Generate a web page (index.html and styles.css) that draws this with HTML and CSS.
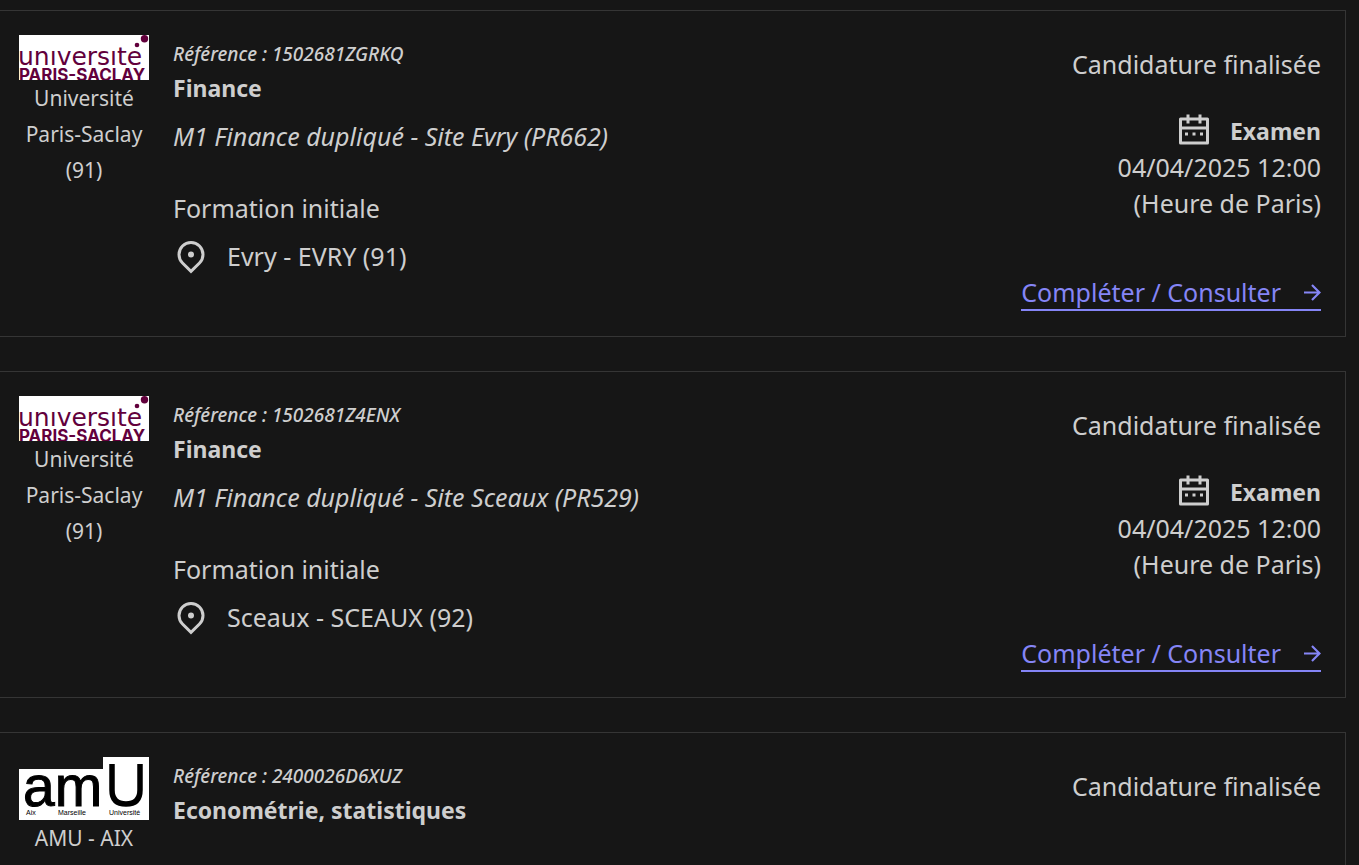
FILE: index.html
```html
<!DOCTYPE html>
<html lang="fr">
<head>
  <meta charset="utf-8">
  <title>Mes candidatures</title>
  <link rel="stylesheet" href="styles.css">
</head>
<body>
  <!-- Shared drawings -->
  <svg class="sprite" aria-hidden="true">
    <symbol id="logo-saclay" viewBox="0 0 130 45">
      <rect width="130" height="45" fill="#fff"/>
      <text class="saclay-top" x="-1" y="30">unıversıte</text>
      <text class="saclay-bottom" x="0" y="46">PARIS-SACLAY</text>
      <circle cx="118" cy="10" r="2.3" fill="#62003c"/>
      <circle cx="125.500" cy="3.700" r="3.700" fill="#62003c"/>
    </symbol>
    <symbol id="logo-amu" viewBox="0 0 130 63">
      <path d="M0 12H84V0H130V63H0Z" fill="#fff"/>
      <text class="amu-big" x="4" y="49">am</text>
      <path d="M93 7V33Q93 47 107 47T121 33V7" fill="none" stroke="#000" stroke-width="5.500"/>
      <text class="amu-small" x="7" y="58">Aix</text>
      <text class="amu-small" x="39" y="58">Marseille</text>
      <text class="amu-small" x="90" y="58">Université</text>
    </symbol>
    <symbol id="icon-calendar" viewBox="0 0 24 24">
      <path d="M17 3h4a1 1 0 0 1 1 1v16a1 1 0 0 1-1 1H3a1 1 0 0 1-1-1V4a1 1 0 0 1 1-1h4V1h2v2h6V1h2v2zm3 8H4v8h16v-8zm-5-6H9v2H7V5H4v4h16V5h-3v2h-2V5zm-9 8h2v2H6v-2zm5 0h2v2h-2v-2zm5 0h2v2h-2v-2z"/>
    </symbol>
    <symbol id="icon-pin" viewBox="0 0 24 24">
      <path d="M12 20.900l4.950-4.950a7 7 0 1 0-9.900 0L12 20.900zm0 2.828l-6.364-6.364a9 9 0 1 1 12.728 0L12 23.728zM12 13a2 2 0 1 1 0-4 2 2 0 0 1 0 4z"/>
    </symbol>
    <symbol id="icon-arrow" viewBox="4 4 16 16">
      <path d="M16.172 11l-5.364-5.364 1.414-1.414L20 12l-7.778 7.778-1.414-1.414L16.172 13H4v-2z"/>
    </symbol>
  </svg>

  <main class="candidatures">
    <article class="card">
      <div class="card-school">
        <svg class="logo-saclay" role="img" aria-label="Université Paris-Saclay"><use href="#logo-saclay"/></svg>
        <p>Université Paris-Saclay (91)</p>
      </div>
      <div class="card-main">
        <p class="reference">Référence : 1502681ZGRKQ</p>
        <h2>Finance</h2>
        <p class="parcours">M1 Finance dupliqué - Site Evry (PR662)</p>
        <p>Formation initiale</p>
        <p class="place"><svg class="icon"><use href="#icon-pin"/></svg>Evry - EVRY (91)</p>
      </div>
      <div class="card-status">
        <p class="status">Candidature finalisée</p>
        <p class="exam"><svg class="icon"><use href="#icon-calendar"/></svg>Examen</p>
        <p>04/04/2025 12:00</p>
        <p>(Heure de Paris)</p>
        <a class="card-link" href="#">Compléter / Consulter<svg class="arrow"><use href="#icon-arrow"/></svg></a>
      </div>
    </article>

    <article class="card">
      <div class="card-school">
        <svg class="logo-saclay" role="img" aria-label="Université Paris-Saclay"><use href="#logo-saclay"/></svg>
        <p>Université Paris-Saclay (91)</p>
      </div>
      <div class="card-main">
        <p class="reference">Référence : 1502681Z4ENX</p>
        <h2>Finance</h2>
        <p class="parcours">M1 Finance dupliqué - Site Sceaux (PR529)</p>
        <p>Formation initiale</p>
        <p class="place"><svg class="icon"><use href="#icon-pin"/></svg>Sceaux - SCEAUX (92)</p>
      </div>
      <div class="card-status">
        <p class="status">Candidature finalisée</p>
        <p class="exam"><svg class="icon"><use href="#icon-calendar"/></svg>Examen</p>
        <p>04/04/2025 12:00</p>
        <p>(Heure de Paris)</p>
        <a class="card-link" href="#">Compléter / Consulter<svg class="arrow"><use href="#icon-arrow"/></svg></a>
      </div>
    </article>

    <article class="card">
      <div class="card-school">
        <svg class="logo-amu" role="img" aria-label="Aix Marseille Université"><use href="#logo-amu"/></svg>
        <p>AMU - AIX</p>
      </div>
      <div class="card-main">
        <p class="reference">Référence : 2400026D6XUZ</p>
        <h2>Econométrie, statistiques</h2>
      </div>
      <div class="card-status">
        <p class="status">Candidature finalisée</p>
      </div>
    </article>
  </main>
</body>
</html>
```

FILE: styles.css
```css
:root {
  --background: #161616;
  --text: #cecece;
  --border: #353535;
  --link: #8585f6;
}

* {
  box-sizing: border-box;
}

body {
  margin: 0;
  background-color: var(--background);
  color: var(--text);
  font-family: "Noto Sans", "Open Sans", sans-serif;
  font-size: 25px;
  line-height: 36px;
}

p, h2 {
  margin: 0;
}

svg {
  fill: currentColor;
}

.sprite {
  display: none;
}

.candidatures {
  display: flex;
  flex-direction: column;
  gap: 34px;
  padding: 10px 13px 34px 0;
}

.card {
  display: flex;
  min-height: 327px;
  padding: 24px 24px 24px 19px;
  border: 1px solid var(--border);
  border-left: none;
}

/* School column */
.card-school {
  width: 130px;
  margin-right: 24px;
  text-align: center;
  font-size: 21px;
}

.logo-saclay, .logo-amu {
  display: block;
  width: 130px;
}

.logo-saclay {
  height: 45px;
}

.logo-amu {
  height: 63px;
}

.saclay-top, .saclay-bottom {
  fill: #62003c;
}

.saclay-top {
  font-family: "DejaVu Sans", sans-serif;
  font-size: 25px;
}

.saclay-bottom {
  font-family: Inter, sans-serif;
  font-size: 17px;
  font-weight: bold;
}

.amu-big, .amu-small {
  font-family: "Liberation Sans", Arial, sans-serif;
  fill: #000;
}

.amu-big {
  font-size: 57px;
  stroke: #000;
  stroke-width: 1px;
}

.amu-small {
  font-size: 7px;
}

/* Course column */
.card-main {
  flex: 1;
}

.reference {
  padding-top: 3px;
  font-size: 19px;
  font-style: italic;
  font-weight: 500;
  line-height: 32px;
}

h2 {
  font-size: 23px;
  line-height: 36px;
}

.parcours {
  margin: 12px 0 36px;
  font-style: italic;
}

.place {
  display: flex;
  align-items: center;
  gap: 18px;
  margin-top: 12px;
}

.icon {
  width: 36px;
  height: 36px;
}

/* Status column */
.card-status {
  display: flex;
  flex-direction: column;
  align-items: flex-end;
  text-align: right;
}

.status {
  margin: 11px 0 31px;
}

.exam {
  display: flex;
  align-items: center;
  gap: 18px;
  font-size: 23px;
  font-weight: bold;
}

.card-link {
  display: flex;
  align-items: center;
  gap: 23px;
  margin: auto 0 1px;
  border-bottom: 2px solid var(--link);
  color: var(--link);
  line-height: 34px;
  text-decoration: none;
}

.arrow {
  width: 17px;
  height: 17px;
}
```
